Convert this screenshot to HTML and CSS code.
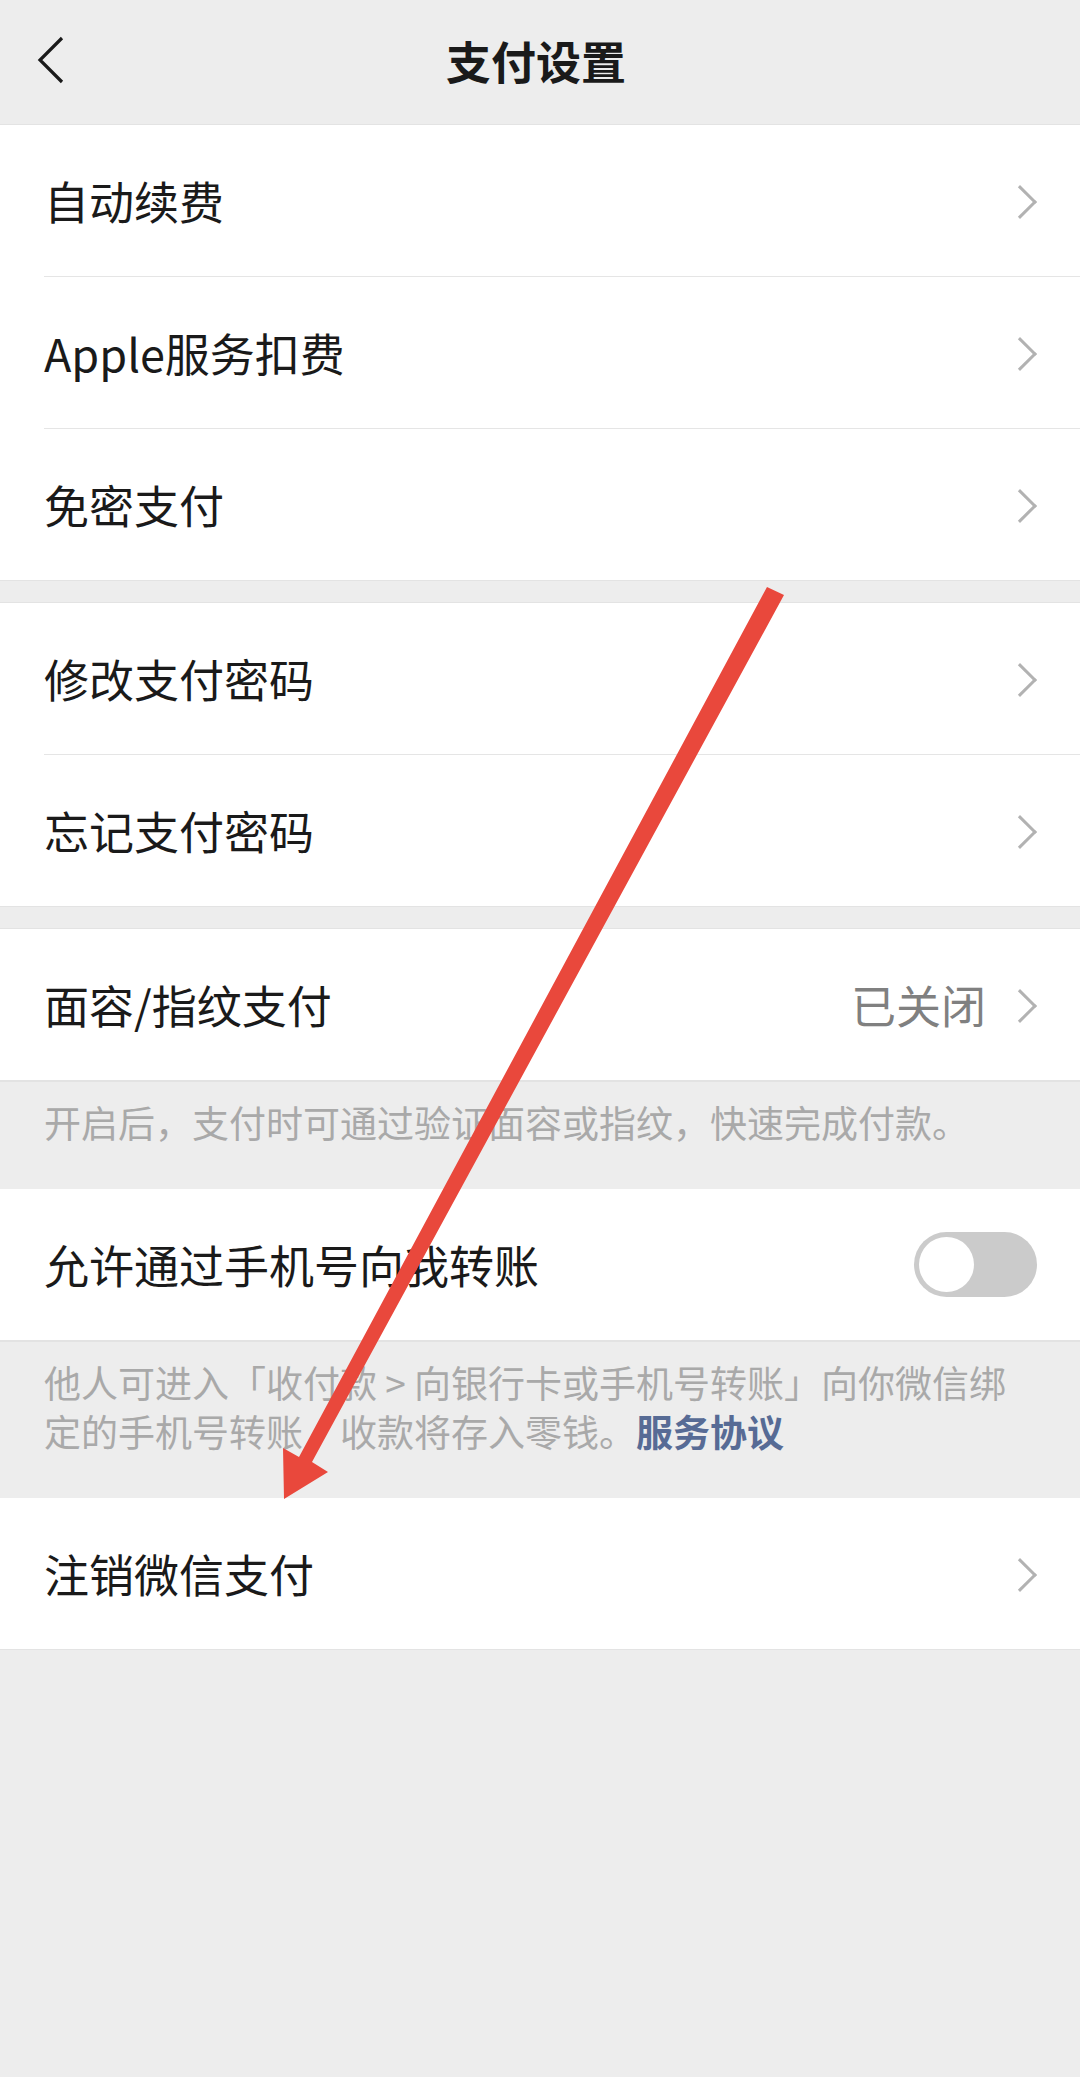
FILE: index.html
```html
<!DOCTYPE html>
<html lang="zh-CN">
<head>
<meta charset="utf-8">
<title>支付设置</title>
<link rel="stylesheet" href="styles.css">
</head>
<body>
<div class="page">
  <header class="nav">
    <span class="back">
      <svg width="30" height="50" viewBox="0 0 30 50"><polyline points="26,4 4,26 26,48" fill="none" stroke="#1a1a1a" stroke-width="3.2" stroke-linejoin="miter"/></svg>
    </span>
    <h1 class="title">支付设置</h1>
  </header>

  <section class="group first">
    <div class="cell"><span class="label">自动续费</span><span class="arrow"></span></div>
    <div class="cell"><span class="label">Apple服务扣费</span><span class="arrow"></span></div>
    <div class="cell"><span class="label">免密支付</span><span class="arrow"></span></div>
  </section>

  <section class="group">
    <div class="cell"><span class="label">修改支付密码</span><span class="arrow"></span></div>
    <div class="cell"><span class="label">忘记支付密码</span><span class="arrow"></span></div>
  </section>

  <section class="group">
    <div class="cell"><span class="label">面容/指纹支付</span><span class="value">已关闭</span><span class="arrow"></span></div>
  </section>
  <p class="tip">开启后，支付时可通过验证面容或指纹，快速完成付款。</p>

  <section class="group nogap">
    <div class="cell"><span class="label">允许通过手机号向我转账</span><span class="switch"><span class="knob"></span></span></div>
  </section>
  <p class="tip">他人可进入「收付款 &gt; 向银行卡或手机号转账」向你微信绑定的手机号转账，收款将存入零钱。<a class="link">服务协议</a></p>

  <section class="group nogap">
    <div class="cell"><span class="label">注销微信支付</span><span class="arrow"></span></div>
  </section>

  <svg class="annotation" width="1080" height="2077" viewBox="0 0 1080 2077">
    <polygon points="767,587 784,595 312,1462 328,1472 284,1499 283,1448 299,1457" fill="#e9483c"/>
  </svg>
</div>
</body>
</html>
```

FILE: styles.css
```css
* { box-sizing: border-box; }
html, body {
  margin: 0;
  padding: 0;
  background: #ededed;
}
body {
  font-family: "Noto Sans CJK SC", "Noto Sans", "Liberation Sans", sans-serif;
  color: #1a1a1a;
}
.page {
  position: relative;
  width: 1080px;
  min-height: 2077px;
  background: #ededed;
  overflow: hidden;
}
.nav {
  height: 125px;
  display: flex;
  align-items: center;
  justify-content: center;
  position: relative;
  border-bottom: 1px solid #e3e3e3;
}
.back {
  position: absolute;
  left: 36px;
  top: 34px;
  width: 30px;
  height: 50px;
}
.back svg { display: block; }
.title {
  margin: 0;
  margin-top: -4px;
  margin-left: -8px;
  font-size: 45px;
  font-weight: 700;
  letter-spacing: 0;
  color: #1a1a1a;
}
.group {
  background: #fff;
  margin-top: 21px;
  border-top: 1px solid #e3e3e3;
  border-bottom: 1px solid #e3e3e3;
}
.group.first { margin-top: 0; border-top: none; }
.group.nogap { margin-top: 0; border-top: none; }
.cell {
  height: 151px;
  display: flex;
  align-items: center;
  padding: 0 46px 0 44px;
  position: relative;
}
.cell + .cell { border-top: 1px solid #e5e5e5; margin-left: 44px; padding-left: 0; height: 152px; }
.label {
  flex: 1;
  font-size: 45px;
  line-height: 1;
  color: #1a1a1a;
}
.value {
  font-size: 45px;
  line-height: 1;
  color: #808080;
  margin-right: 26px;
}
.arrow {
  width: 22px;
  height: 36px;
  position: relative;
}
.arrow::before {
  content: "";
  position: absolute;
  left: -4px;
  top: 7px;
  width: 21px;
  height: 21px;
  border-top: 3.4px solid #b2b2b2;
  border-right: 3.4px solid #b2b2b2;
  transform: rotate(45deg);
}
.switch {
  width: 123px;
  height: 65px;
  border-radius: 33px;
  background: #cbcbcb;
  position: relative;
  margin-right: -3px;
}
.knob {
  position: absolute;
  left: 5px;
  top: 5px;
  width: 55px;
  height: 55px;
  border-radius: 50%;
  background: #fff;
}
.tip {
  margin: 0;
  padding: 16px 44px 42px 44px;
  font-size: 37px;
  line-height: 49px;
  color: #a9a9a9;
  border-top: 1px solid #e3e3e3;
}
.link {
  color: #576b95;
  font-weight: 600;
}
.annotation {
  position: absolute;
  left: 0;
  top: 0;
  pointer-events: none;
}
```
